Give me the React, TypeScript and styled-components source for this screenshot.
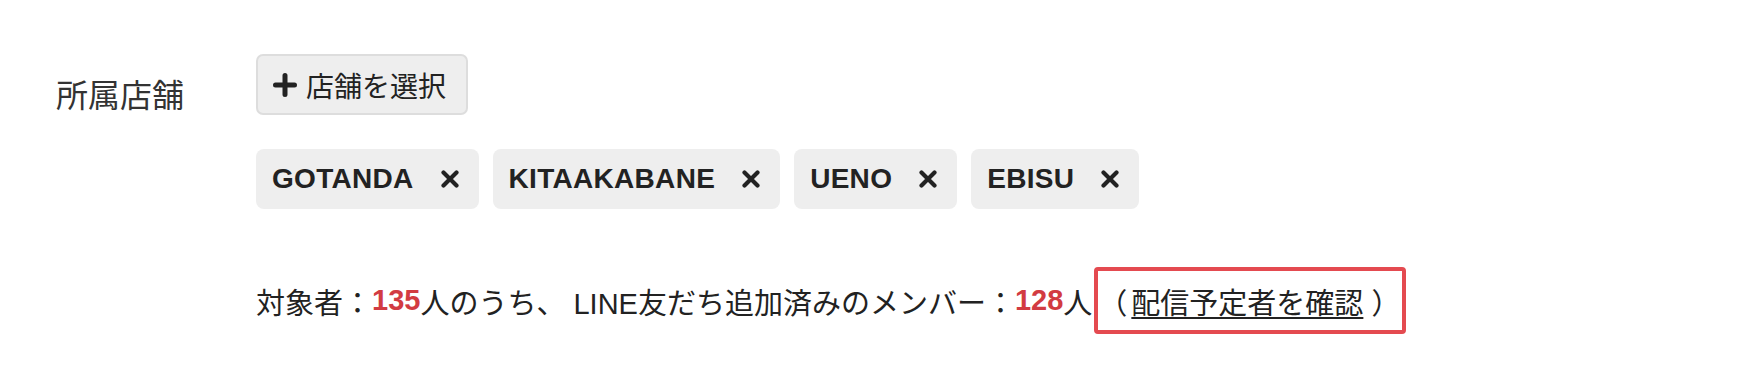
import React from "react";
import styled, { createGlobalStyle } from "styled-components";

const GlobalStyle = createGlobalStyle`
  html, body {
    margin: 0;
    padding: 0;
    background: #ffffff;
  }
  body {
    font-family: "Liberation Sans", "Noto Sans CJK JP", sans-serif;
    color: #222222;
  }
`;

const Page = styled.div`
  padding: 54px 0 0 56px;
  box-sizing: border-box;
  width: 1760px;
  height: 368px;
`;

const FieldRow = styled.div`
  display: flex;
  align-items: flex-start;
`;

const FieldLabel = styled.div`
  width: 200px;
  margin-top: 18px;
  font-size: 32px;
  line-height: 48px;
  color: #333333;
`;

const FieldBody = styled.div`
  display: flex;
  flex-direction: column;
  align-items: flex-start;
`;

const SelectButton = styled.button`
  display: inline-flex;
  align-items: center;
  gap: 9px;
  height: 61px;
  box-sizing: border-box;
  padding: 0 20px 0 15px;
  background: #eeeeee;
  border: 2px solid #dddddd;
  border-radius: 7px;
  font-family: inherit;
  font-size: 28px;
  color: #222222;
  cursor: pointer;
`;

const TagList = styled.div`
  display: flex;
  gap: 14px;
  margin-top: 34px;
`;

const Tag = styled.div`
  display: inline-flex;
  align-items: center;
  gap: 27px;
  height: 60px;
  box-sizing: border-box;
  padding: 0 20px 0 16px;
  background: #eeeeee;
  border-radius: 8px;
  font-size: 28px;
  font-weight: 700;
  letter-spacing: 0.3px;
  color: #222222;
`;

const Summary = styled.div`
  display: flex;
  align-items: center;
  height: 67px;
  margin-top: 58px;
  font-size: 29px;
  color: #222222;
  white-space: pre;
`;

const Count = styled.span`
  color: #d23b42;
  font-weight: 700;
`;

const Highlight = styled.span`
  display: inline-flex;
  align-items: center;
  height: 67px;
  box-sizing: border-box;
  margin-left: 2px;
  padding: 0 2px 0 0;
  border: 4px solid #e44a50;
  border-radius: 4px;
`;

const LinkText = styled.a`
  margin: 0 8px 0 4px;
  color: #222222;
  text-decoration: underline;
  text-underline-offset: 3px;
  text-decoration-thickness: 2px;
  cursor: pointer;
`;

const PlusIcon = () => (
  <svg width="24" height="24" viewBox="0 0 24 24" aria-hidden="true">
    <path d="M2.5 12H21.5M12 2.5V21.5" stroke="#222" strokeWidth="5" strokeLinecap="round" fill="none" />
  </svg>
);

const CloseIcon = () => (
  <svg width="18" height="18" viewBox="0 0 18 18" aria-hidden="true">
    <path d="M2.5 2.5L15.5 15.5M15.5 2.5L2.5 15.5" stroke="#222" strokeWidth="4.2" strokeLinecap="round" fill="none" />
  </svg>
);

const stores = ["GOTANDA", "KITAAKABANE", "UENO", "EBISU"];

export default function App() {
  return (
    <>
      <GlobalStyle />
      <Page>
        <FieldRow>
          <FieldLabel>所属店舗</FieldLabel>
          <FieldBody>
            <SelectButton type="button">
              <PlusIcon />
              店舗を選択
            </SelectButton>
            <TagList>
              {stores.map((s) => (
                <Tag key={s}>
                  {s}
                  <CloseIcon />
                </Tag>
              ))}
            </TagList>
            <Summary>
              対象者：<Count>135</Count>人のうち、 LINE友だち追加済みのメンバー：<Count>128</Count>人
              <Highlight>
                （<LinkText>配信予定者を確認</LinkText>）
              </Highlight>
            </Summary>
          </FieldBody>
        </FieldRow>
      </Page>
    </>
  );
}
